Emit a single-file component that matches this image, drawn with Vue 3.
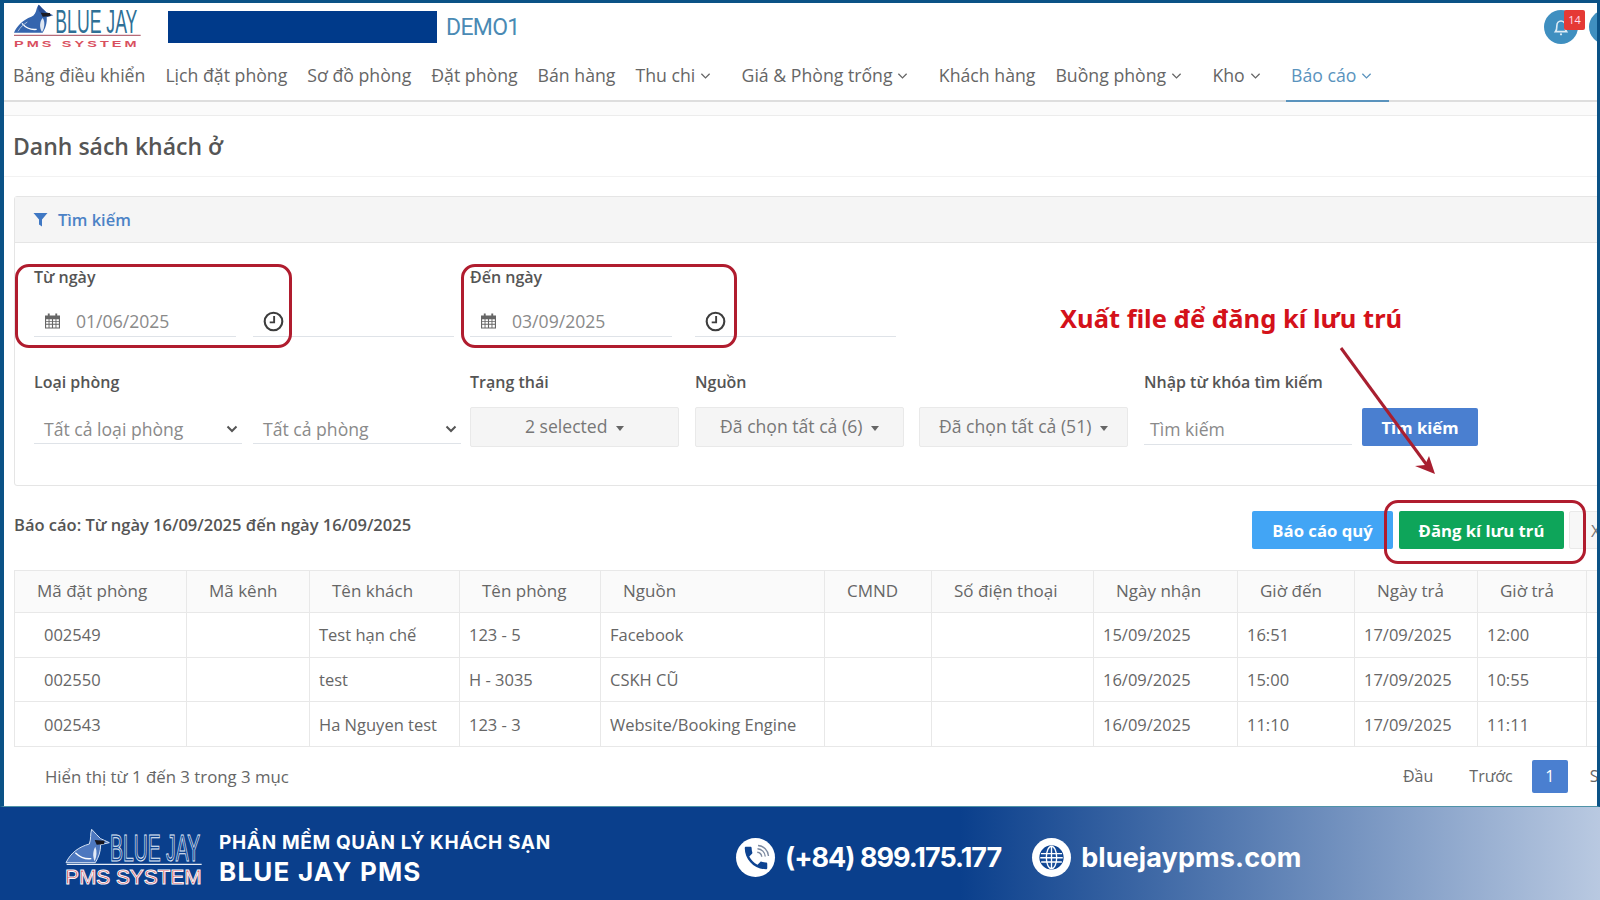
<script setup>
const navItems = [
  { label: 'Bảng điều khiển' },
  { label: 'Lịch đặt phòng' },
  { label: 'Sơ đồ phòng' },
  { label: 'Đặt phòng' },
  { label: 'Bán hàng' },
  { label: 'Thu chi', caret: true },
  { label: 'Giá & Phòng trống', caret: true },
  { label: 'Khách hàng' },
  { label: 'Buồng phòng', caret: true },
  { label: 'Kho', caret: true },
  { label: 'Báo cáo', caret: true, active: true }
]

const dateFields = [
  { label: 'Từ ngày', value: '01/06/2025' },
  { label: 'Đến ngày', value: '03/09/2025' }
]

const columns = [
  'Mã đặt phòng', 'Mã kênh', 'Tên khách', 'Tên phòng', 'Nguồn', 'CMND',
  'Số điện thoại', 'Ngày nhận', 'Giờ đến', 'Ngày trả', 'Giờ trả', ''
]

const columnWidths = [172, 123, 150, 141, 224, 107, 162, 144, 117, 123, 109, 100]

const rows = [
  ['002549', '', 'Test hạn chế', '123 - 5', 'Facebook', '', '', '15/09/2025', '16:51', '17/09/2025', '12:00', ''],
  ['002550', '', 'test', 'H - 3035', 'CSKH CŨ', '', '', '16/09/2025', '15:00', '17/09/2025', '10:55', ''],
  ['002543', '', 'Ha Nguyen test', '123 - 3', 'Website/Booking Engine', '', '', '16/09/2025', '11:10', '17/09/2025', '11:11', '']
]
</script>

<template>
  <div class="app">
    <div class="frame">
      <div class="topbar">
        <svg class="logo" viewBox="0 0 420 156" width="140" height="52">
          <path d="M18 92 C26 72 44 54 70 44 C80 40 84 30 86 20 C88 14 90 10 92 8 C98 14 106 22 114 30 L136 40 L116 46 C118 62 112 80 104 92 Z" fill="#3565ae" />
          <path d="M92 8 C98 14 106 22 114 30 L100 34 C92 28 88 18 92 8 Z" fill="#274b8f" />
          <path d="M98 32 L126 33 L128 42 L104 44 Z" fill="#1c1c24" />
          <path d="M42 64 C54 78 70 84 86 82" stroke="#fff" stroke-width="4" fill="none" />
          <path d="M30 88 C38 74 46 68 58 60" stroke="#a9bedc" stroke-width="3" fill="none" />
          <path d="M104 48 C112 60 110 78 102 90 C94 78 94 60 104 48 Z" fill="#dfe7f2" />
          <line x1="18" y1="100" x2="398" y2="100" stroke="#b56a78" stroke-width="4" />
          <text transform="translate(142 92) scale(0.546 1)" font-size="97" fill="#2f7096" font-family="Liberation Sans, sans-serif">BLUE JAY</text>
          <text transform="translate(18 135) scale(1.55 1)" font-size="28" font-weight="700" letter-spacing="6" fill="#d9505f" font-family="Liberation Sans, sans-serif">PMS SYSTEM</text>
        </svg>
        <div class="hotel-mask"></div>
        <div class="hotel-name">DEMO1</div>
        <div class="bell">
          <svg viewBox="0 0 24 24" width="22" height="22" fill="none" stroke="#dcebf5" stroke-width="1.8">
            <path d="M6 17 C7.5 15 7.5 13 7.5 10.5 C7.5 7.5 9.5 5.5 12 5.5 C14.5 5.5 16.5 7.5 16.5 10.5 C16.5 13 16.5 15 18 17 Z" />
            <circle cx="12" cy="20" r="1.2" fill="#dcebf5" stroke="none" />
          </svg>
          <span class="bell-badge">14</span>
        </div>
        <div class="avatar"></div>
      </div>

      <nav class="nav">
        <a
          v-for="item in navItems"
          :key="item.label"
          class="nav-item"
          :class="{ 'has-caret': item.caret, active: item.active }"
        >
          {{ item.label }}
          <svg v-if="item.caret" class="nav-caret" viewBox="0 0 12 8" width="11" height="8" fill="none" stroke="currentColor" stroke-width="1.4">
            <path d="M1.5 1.5 L6 6 L10.5 1.5" />
          </svg>
        </a>
      </nav>
      <div class="nav-band"></div>

      <h1 class="page-title">Danh sách khách ở</h1>

      <div class="content">
        <section class="card">
          <div class="card-header">
            <svg viewBox="0 0 14 14" width="15" height="14" fill="#3f78c4">
              <path d="M0 0 H14 L8.5 6.5 V13.5 L5.5 11.5 V6.5 Z" />
            </svg>
            <span>Tìm kiếm</span>
          </div>

          <div class="card-body">
            <div class="filter-grid">
              <label v-for="field in dateFields" :key="field.label" class="field-label span-2">{{ field.label }}</label>
            </div>
            <div class="filter-grid">
              <template v-for="field in dateFields" :key="field.value">
                <div class="date-input">
                  <svg class="cal-icon" viewBox="0 0 16 16" width="15" height="16" fill="#666">
                    <rect x="3" y="0" width="2" height="3.5" />
                    <rect x="11" y="0" width="2" height="3.5" />
                    <path d="M0 2 H16 V16 H0 Z M1.2 6 V7.9 H3.8 V6 Z M4.8 6 V7.9 H7.4 V6 Z M8.6 6 V7.9 H11.2 V6 Z M12.2 6 V7.9 H14.8 V6 Z M1.2 8.9 V11 H3.8 V8.9 Z M4.8 8.9 V11 H7.4 V8.9 Z M8.6 8.9 V11 H11.2 V8.9 Z M12.2 8.9 V11 H14.8 V8.9 Z M1.2 12 V14.8 H3.8 V12 Z M4.8 12 V14.8 H7.4 V12 Z M8.6 12 V14.8 H11.2 V12 Z M12.2 12 V14.8 H14.8 V12 Z" fill-rule="evenodd" />
                  </svg>
                  <span>{{ field.value }}</span>
                </div>
                <div class="time-input">
                  <svg viewBox="0 0 20 20" width="21" height="21" fill="none" stroke="#3d3d3d">
                    <circle cx="10" cy="10" r="8.4" stroke-width="2" />
                    <path d="M10.6 4.8 V10.8 H6.4" stroke-width="1.8" />
                  </svg>
                </div>
              </template>
            </div>

            <div class="filter-grid">
              <label class="field-label second-row span-2">Loại phòng</label>
              <label class="field-label second-row">Trạng thái</label>
              <label class="field-label second-row span-2">Nguồn</label>
              <label class="field-label second-row span-2">Nhập từ khóa tìm kiếm</label>
            </div>

            <div class="filter-grid">
              <div class="select-line">
                <span>Tất cả loại phòng</span>
                <svg viewBox="0 0 12 8" width="12" height="8" fill="none" stroke="#555" stroke-width="2"><path d="M1.5 1.5 L6 6 L10.5 1.5" /></svg>
              </div>
              <div class="select-line">
                <span>Tất cả phòng</span>
                <svg viewBox="0 0 12 8" width="12" height="8" fill="none" stroke="#555" stroke-width="2"><path d="M1.5 1.5 L6 6 L10.5 1.5" /></svg>
              </div>
              <button class="multi-btn">2 selected <i class="caret"></i></button>
              <button class="multi-btn">Đã chọn tất cả (6) <i class="caret"></i></button>
              <button class="multi-btn">Đã chọn tất cả (51) <i class="caret"></i></button>
              <div class="search-input">Tìm kiếm</div>
              <button class="btn btn-search">Tìm kiếm</button>
            </div>
          </div>
        </section>

        <div class="report-row">
          <div class="report-text">Báo cáo: Từ ngày 16/09/2025 đến ngày 16/09/2025</div>
          <button class="btn btn-quarter">Báo cáo quý</button>
          <button class="btn btn-register">Đăng kí lưu trú</button>
          <button class="btn btn-export">Xuất file</button>
        </div>

        <table class="guest-table">
          <colgroup>
            <col v-for="(w, i) in columnWidths" :key="i" :style="{ width: w + 'px' }">
          </colgroup>
          <thead>
            <tr>
              <th v-for="(col, i) in columns" :key="i">{{ col }}</th>
            </tr>
          </thead>
          <tbody>
            <tr v-for="row in rows" :key="row[0]">
              <td v-for="(cell, i) in row" :key="i">{{ cell }}</td>
            </tr>
          </tbody>
        </table>

        <div class="table-foot">
          <div class="table-info">Hiển thị từ 1 đến 3 trong 3 mục</div>
          <a class="page-link first">Đầu</a>
          <a class="page-link prev">Trước</a>
          <a class="page-current">1</a>
          <a class="page-link next">Sau</a>
        </div>
      </div>
    </div>

    <footer class="promo">
      <svg class="promo-logo" viewBox="0 0 450 204" width="150" height="68">
        <path d="M18 122 C32 92 58 74 88 66 C94 50 90 36 95 22 C104 32 114 42 122 50 L148 62 L122 68 C122 88 116 106 106 122 Z" fill="#4d78bf" stroke="#d5e2f4" stroke-width="3" />
        <path d="M104 54 L134 56 L132 66 L110 68 Z" fill="#15151d" />
        <path d="M46 92 C60 106 76 112 94 110" stroke="#fff" stroke-width="4" fill="none" />
        <path d="M106 74 C112 88 110 104 104 118 C98 104 98 88 106 74 Z" fill="#e3ebf6" />
        <line x1="20" y1="127" x2="425" y2="127" stroke="#e7edf6" stroke-width="4" />
        <text transform="translate(150 118) scale(0.52 1)" font-size="112" fill="#0d4391" stroke="#e8f0fa" stroke-width="3" font-family="Liberation Sans, sans-serif">BLUE JAY</text>
        <text transform="translate(15 186)" font-size="62.5" fill="#d9353d" stroke="#f3f4f8" stroke-width="3" font-family="Liberation Sans, sans-serif">PMS SYSTEM</text>
      </svg>

      <div class="promo-title">
        <div class="promo-line">PHẦN MỀM QUẢN LÝ KHÁCH SẠN</div>
        <div class="promo-brand">BLUE JAY PMS</div>
      </div>

      <div class="contact phone">
        <span class="contact-icon">
          <svg viewBox="0 0 24 24" width="30" height="30">
            <path d="M6.62 10.79c1.44 2.83 3.76 5.14 6.59 6.59l2.2-2.2c.27-.27.67-.36 1.02-.24 1.12.37 2.33.57 3.57.57.55 0 1 .45 1 1V20c0 .55-.45 1-1 1-9.39 0-17-7.61-17-17 0-.55.45-1 1-1h3.5c.55 0 1 .45 1 1 0 1.25.2 2.45.57 3.57.11.35.03.74-.25 1.02l-2.2 2.2z" fill="#0d4391" />
            <path d="M13 7.4 C15 7.6 16.4 9 16.6 11 M13.2 4.6 C16.6 4.8 19.2 7.4 19.4 10.8 M13.6 2 C18 2.2 21.8 6 22 10.4" fill="none" stroke="#7d8aa0" stroke-width="1.1" />
          </svg>
        </span>
        <span>(+84) 899.175.177</span>
      </div>

      <div class="contact web">
        <span class="contact-icon">
          <svg viewBox="0 0 24 24" width="27" height="27" fill="none" stroke="#0d4391" stroke-width="1.6">
            <circle cx="12" cy="12" r="10" fill="#174c99" />
            <ellipse cx="12" cy="12" rx="4.6" ry="10" stroke="#fff" stroke-width="1.2" />
            <path d="M12 2 V22 M2.6 8.5 H21.4 M2 12.2 H22 M2.8 16 H21.2" stroke="#fff" stroke-width="1.2" />
          </svg>
        </span>
        <span>bluejaypms.com</span>
      </div>
    </footer>

    <!-- annotations drawn over the screenshot -->
    <div class="mark mark-from"></div>
    <div class="mark mark-to"></div>
    <div class="mark mark-register"></div>
    <div class="note">Xuất file để đăng kí lưu trú</div>
    <svg class="arrow" viewBox="0 0 110 140" width="110" height="140">
      <path d="M6 8 L94 128" stroke="#a81f30" stroke-width="3" fill="none" />
      <path d="M100 134 L94 116 L90 125 L80 126 Z" fill="#a81f30" />
    </svg>
  </div>
</template>

<style>
html, body {
  margin: 0;
  background: #fff;
}
</style>

<style scoped>
.app {
  position: relative;
  width: 1600px;
  height: 900px;
  overflow: hidden;
  font-family: "Open Sans", "Noto Sans", sans-serif;
  color: #666;
  display: flex;
  flex-direction: column;
}

.frame {
  flex: none;
  height: 807px;
  box-sizing: border-box;
  border-top: 3px solid #0b5286;
  border-left: 4px solid #0b5286;
  border-right: 3px solid #0b5286;
  border-bottom: 1px solid #4f93a8;
  background: #fff;
  overflow: hidden;
}

.topbar {
  height: 54px;
  box-sizing: border-box;
  padding: 0 0 6px 4px;
  display: flex;
  align-items: center;
}

.logo {
  flex: none;
  margin-top: 2px;
}

.hotel-mask {
  width: 269px;
  height: 32px;
  margin-left: 20px;
  background: #003a8a;
}

.hotel-name {
  margin-left: 9px;
  font-family: Roboto, sans-serif;
  font-size: 23px;
  letter-spacing: -0.7px;
  color: #4a8ab4;
}

.bell {
  position: relative;
  width: 34px;
  height: 34px;
  margin-left: auto;
  margin-right: 11px;
  border-radius: 50%;
  background: #3f8fc0;
  display: flex;
  align-items: center;
  justify-content: center;
}

.bell-badge {
  position: absolute;
  top: 0;
  left: 20px;
  width: 21px;
  height: 20px;
  background: #e53935;
  border-radius: 2px;
  color: #fde;
  font-size: 11px;
  line-height: 20px;
  text-align: center;
}

.avatar {
  width: 34px;
  height: 34px;
  flex: none;
  margin-right: -26px;
  border-radius: 50%;
  background: #3f8fc0;
}

.nav {
  height: 43px;
  display: flex;
  gap: 20px;
  padding-left: 9px;
  border-bottom: 2px solid #dedede;
  font-size: 17.7px;
}

.nav-item {
  position: relative;
  height: 43px;
  line-height: 37px;
  white-space: nowrap;
  color: #666;
}

.nav-item.has-caret {
  margin-right: 10.5px;
}

.nav-caret {
  margin-left: 0.2px;
  vertical-align: 2px;
}

.nav-item.active {
  color: #5a93bd;
}

.nav-item.active::after {
  content: "";
  position: absolute;
  left: -5px;
  right: -17px;
  bottom: -2px;
  height: 2px;
  background: #5a93bd;
}

.nav-band {
  height: 13px;
  background: #fbfbfb;
  border-bottom: 1px solid #ececec;
}

.page-title {
  height: 61px;
  margin: 0;
  padding-left: 9px;
  box-sizing: border-box;
  border-bottom: 1px solid #f2f2f2;
  font-size: 23px;
  font-weight: 600;
  line-height: 60px;
  color: #555;
}

.content {
  width: 1720px;
  padding: 19px 0 0 10px;
}

.card {
  height: 290px;
  box-sizing: border-box;
  border: 1px solid #e5e5e5;
  border-radius: 3px;
}

.card-header {
  height: 46px;
  box-sizing: border-box;
  display: flex;
  align-items: center;
  gap: 10px;
  padding-left: 18px;
  background: #f5f5f5;
  border-bottom: 1px solid #e5e5e5;
  color: #4b82c6;
  font-size: 16.4px;
  font-weight: 600;
}

.card-body {
  padding: 24px 0 0 19px;
}

.filter-grid {
  display: grid;
  grid-template-columns: 219px 217px 225px 224px 225px 218px 116px;
  align-items: end;
}

.field-label {
  height: 20px;
  line-height: 20px;
  font-size: 16px;
  font-weight: 600;
  color: #555;
}

.field-label.span-2 {
  grid-column: span 2;
}

.field-label.second-row {
  margin-top: 35px;
  margin-bottom: 14px;
}

.date-input {
  height: 36px;
  width: 202px;
  margin-top: 14px;
  box-sizing: border-box;
  display: flex;
  align-items: center;
  gap: 16px;
  padding: 4px 0 0 11px;
  border-bottom: 1px solid #dfe3e8;
  font-size: 17.6px;
  color: #8a8a8a;
}

.cal-icon {
  flex: none;
}

.time-input {
  height: 36px;
  width: 201px;
  box-sizing: border-box;
  display: flex;
  align-items: center;
  padding: 6px 0 0 10px;
  border-bottom: 1px solid #dfe3e8;
}

.select-line {
  width: 208px;
  height: 38px;
  box-sizing: border-box;
  display: flex;
  align-items: center;
  justify-content: space-between;
  padding: 8px 4px 0 10px;
  border-bottom: 1px solid #dfe3e8;
  font-size: 17.6px;
  color: #8a8a8a;
  margin-bottom: 3px;
}

.multi-btn {
  width: 209px;
  height: 40px;
  padding: 0 0 3px;
  border: 1px solid #e9e9e9;
  border-radius: 2px;
  background: #f5f5f5;
  font-family: inherit;
  font-size: 17.6px;
  color: #777;
}

.caret {
  display: inline-block;
  margin-left: 4px;
  vertical-align: 2px;
  border-top: 5px solid #666;
  border-left: 4px solid transparent;
  border-right: 4px solid transparent;
}

.search-input {
  width: 208px;
  height: 37px;
  box-sizing: border-box;
  padding: 9px 0 0 6px;
  border-bottom: 1px solid #dfe3e8;
  font-size: 17.6px;
  line-height: 24px;
  color: #8a8a8a;
  margin-bottom: 2px;
}

.btn {
  height: 38px;
  padding: 0;
  border: none;
  border-radius: 2px;
  font-family: inherit;
  font-size: 16.7px;
  font-weight: 700;
  color: #fff;
}

.btn-search {
  width: 116px;
  margin-bottom: 1px;
  background: #4a7fd0;
}

.report-row {
  height: 38px;
  margin-top: 25px;
  display: flex;
  white-space: nowrap;
}

.report-text {
  width: 1238px;
  flex: none;
  line-height: 28px;
  font-size: 16.5px;
  font-weight: 600;
  color: #555;
}

.btn-quarter {
  width: 141px;
  margin-right: 6px;
  background: #42a5f5;
}

.btn-register {
  width: 165px;
  margin-right: 5px;
  background: #0ea55a;
}

.btn-export {
  width: 110px;
  padding-left: 21px;
  text-align: left;
  background: #f7f7f7;
  border: 1px solid #e9e9e9;
  font-weight: 400;
  color: #777;
}

.guest-table {
  width: 1672px;
  margin-top: 21px;
  table-layout: fixed;
  border-collapse: collapse;
  font-size: 16.5px;
}

.guest-table th,
.guest-table td {
  border: 1px solid #e8e8e8;
  white-space: nowrap;
  overflow: hidden;
  text-align: left;
  color: #666;
}

.guest-table th {
  height: 39px;
  padding: 0 0 2px 22px;
  background: #fafafa;
  font-size: 17px;
  font-weight: 500;
}

.guest-table td {
  height: 43.7px;
  padding: 0 0 0 9px;
}

.guest-table td:first-child {
  padding-left: 29px;
}

.table-foot {
  height: 58px;
  display: flex;
  align-items: center;
  padding-left: 31px;
  font-size: 16px;
}

.table-info {
  width: 1358px;
  flex: none;
  font-size: 16.8px;
}

.page-link {
  color: #666;
  white-space: nowrap;
}

.page-link.prev {
  margin-left: 36px;
}

.page-link.next {
  margin-left: 22px;
}

.page-current {
  width: 36px;
  height: 33px;
  margin-left: 19px;
  border-radius: 2px;
  background: #4a7fd0;
  color: #fff;
  line-height: 33px;
  text-align: center;
}

.promo {
  flex: 1;
  display: flex;
  align-items: center;
  padding-left: 60px;
  background: linear-gradient(90deg, #0a3f8c 0%, #0a3f8c 60%, #b9c9e1 100%);
  color: #fff;
}

.promo-logo {
  flex: none;
  margin-top: 5px;
}

.promo-title {
  width: 517px;
  flex: none;
  margin-left: 9px;
  margin-top: 9px;
  font-family: Inter, "Noto Sans", sans-serif;
  font-weight: 700;
  white-space: nowrap;
}

.promo-line {
  font-size: 19px;
  letter-spacing: 0.65px;
  line-height: 28px;
}

.promo-brand {
  font-size: 26px;
  letter-spacing: 1.2px;
  line-height: 30px;
}

.contact {
  display: flex;
  align-items: center;
  flex: none;
  margin-top: 8px;
  font-family: Inter, "Noto Sans", sans-serif;
  font-size: 27px;
  font-weight: 700;
  white-space: nowrap;
}

.contact-icon {
  width: 39px;
  height: 39px;
  flex: none;
  margin-right: 10px;
  border-radius: 50%;
  background: #fff;
  display: flex;
  align-items: center;
  justify-content: center;
}

.contact.phone {
  letter-spacing: -1px;
}

.contact.web {
  margin-left: 31px;
  letter-spacing: 0.1px;
}

.mark {
  position: absolute;
  box-sizing: border-box;
  border: 3px solid #b01c2e;
  border-radius: 14px;
  pointer-events: none;
}

.mark-from {
  left: 15px;
  top: 264px;
  width: 277px;
  height: 84px;
}

.mark-to {
  left: 461px;
  top: 264px;
  width: 276px;
  height: 84px;
}

.mark-register {
  left: 1384px;
  top: 500px;
  width: 202px;
  height: 64px;
}

.note {
  position: absolute;
  left: 1060px;
  top: 300px;
  font-family: "Noto Sans", sans-serif;
  font-size: 25.5px;
  font-weight: 700;
  line-height: 36px;
  color: #d4111a;
  white-space: nowrap;
}

.arrow {
  position: absolute;
  left: 1335px;
  top: 340px;
}
</style>
